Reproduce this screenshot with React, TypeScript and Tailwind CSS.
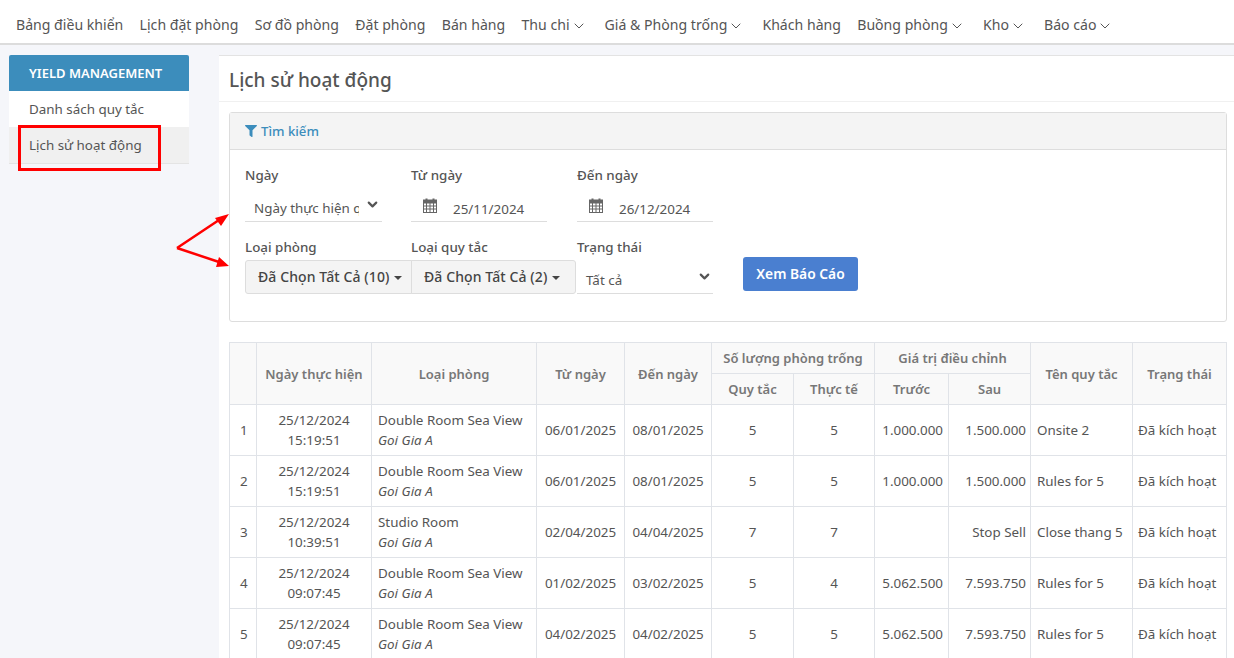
import { ChevronDown } from "lucide-react";
import { FaFilter } from "react-icons/fa";

const nav: [string, boolean][] = [
  ["Bảng điều khiển", false],
  ["Lịch đặt phòng", false],
  ["Sơ đồ phòng", false],
  ["Đặt phòng", false],
  ["Bán hàng", false],
  ["Thu chi", true],
  ["Giá & Phòng trống", true],
  ["Khách hàng", false],
  ["Buồng phòng", true],
  ["Kho", true],
  ["Báo cáo", true],
];

const rows = [
  ["1", "15:19:51", "Double Room Sea View", "06/01/2025", "08/01/2025", "5", "5", "1.000.000", "1.500.000", "Onsite 2"],
  ["2", "15:19:51", "Double Room Sea View", "06/01/2025", "08/01/2025", "5", "5", "1.000.000", "1.500.000", "Rules for 5"],
  ["3", "10:39:51", "Studio Room", "02/04/2025", "04/04/2025", "7", "7", "", "Stop Sell", "Close thang 5"],
  ["4", "09:07:45", "Double Room Sea View", "01/02/2025", "03/02/2025", "5", "4", "5.062.500", "7.593.750", "Rules for 5"],
  ["5", "09:07:45", "Double Room Sea View", "04/02/2025", "04/02/2025", "5", "5", "5.062.500", "7.593.750", "Rules for 5"],
];

const colWidths = [27, 115, 165, 88, 87, 82, 81, 74, 82, 102, 94];
const th = "border border-[#e0e3e8] bg-[#f9f9f9] font-semibold text-[13px] text-[#777] text-center align-middle p-0";
const td = "border border-[#e0e3e8] align-middle text-[#555] p-0";

function CalendarIcon() {
  return (
    <svg width="14" height="15" viewBox="0 0 14 15" className="mb-[6px] shrink-0" fill="none" stroke="#666">
      <rect x="0.5" y="2.5" width="13" height="12" fill="#fff" />
      <rect x="0.5" y="2" width="13" height="3" fill="#666" />
      <path d="M0.5 8 H13.5 M0.5 11 H13.5 M3.5 5 V14.5 M7 5 V14.5 M10.5 5 V14.5" strokeWidth="1" />
      <path d="M3.5 0.5 V3 M10.5 0.5 V3" strokeWidth="2" />
    </svg>
  );
}

function DateField({ value }: { value: string }) {
  return (
    <div className="flex items-center h-[31px] w-[136px] border-b border-[#ddd] pl-[12px] pt-[5px]">
      <CalendarIcon />
      <span className="ml-[16px]">{value}</span>
    </div>
  );
}

function Dropdown({ label, w }: { label: string; w: string }) {
  return (
    <div className={`${w} h-[34px] flex items-center gap-[5px] bg-[#f4f4f4] border border-[#ddd] font-medium text-[14px] tracking-[0.1px] text-[#444]`}>
      <span>{label}</span>
      <span className="w-0 h-0 border-x-[4px] border-x-transparent border-t-[4px] border-t-[#444] mt-[2px]" />
    </div>
  );
}

export default function App() {
  return (
    <div className="relative h-[658px] overflow-hidden bg-[#f5f6fa] text-[13.4px] leading-[20px] text-[#555] font-['Noto_Sans','Open_Sans',sans-serif]">
      <header className="h-[45px] bg-white border-b-2 border-[#dcdcdc] flex items-center pl-4 pt-[7px] gap-[16.3px] text-[14.1px] text-[#555]">
        {nav.map(([label, caret]) => (
          <span key={label} className={`flex items-center gap-[1px] whitespace-nowrap ${caret ? "pr-[1.75px]" : ""}`}>
            {label}
            {caret && <ChevronDown size={16} strokeWidth={1.5} className="mt-[1px]" />}
          </span>
        ))}
      </header>

      <div className="flex pt-[10px]">
        <aside className="w-[180px] ml-[9px] mr-[30px] shrink-0">
          <div className="rounded-t-[2px] h-[36px] bg-[#3c8dbc] text-white font-semibold text-[13px] flex items-center pl-5">
            YIELD MANAGEMENT
          </div>
          <div className="h-[36px] bg-white flex items-center pl-5">Danh sách quy tắc</div>
          <div className="h-[37px] bg-[#f0f0f0] border-b border-[#e4e4e4] flex items-center pl-5">Lịch sử hoạt động</div>
        </aside>

        <main className="flex-1 bg-white border-t border-[#e3e3e3] h-[603px]">
          <div className="h-[46px] border-b border-[#f0f0f0] flex items-center pl-[10px] pt-[2px] text-[19px] font-medium text-[#555]">
            Lịch sử hoạt động
          </div>

          <section className="ml-[10px] mt-[10px] w-[998px] h-[210px] border border-[#ddd] rounded-[3px]">
            <div className="h-[37px] bg-[#f4f4f4] border-b border-[#ddd] flex items-center pl-[15px] gap-[4px] text-[#3c8dbc] font-medium text-[13.2px]">
              <FaFilter className="text-[12px]" />
              <span>Tìm kiếm</span>
            </div>
            <div className="pl-[15px] pt-[15px]">
              <div className="grid grid-cols-[166px_166px_137px] items-start">
                <div>
                  <div className="font-medium mb-[6px]">Ngày</div>
                  <div className="flex items-center justify-between h-[31px] w-[137px] border-b border-[#ddd] pl-[9px] pr-[2px] pt-[4px]">
                    <span className="w-[105px] overflow-hidden whitespace-nowrap">Ngày thực hiện quy tắc</span>
                    <ChevronDown size={15} strokeWidth={3.5} className="mb-[7px]" />
                  </div>
                </div>
                <div>
                  <div className="font-medium mb-[6px]">Từ ngày</div>
                  <DateField value="25/11/2024" />
                </div>
                <div>
                  <div className="font-medium mb-[6px]">Đến ngày</div>
                  <DateField value="26/12/2024" />
                </div>
              </div>
              <div className="flex mt-[15px] items-start">
                <div className="w-[166px]">
                  <div className="font-medium mb-[3px]">Loại phòng</div>
                  <Dropdown label="Đã Chọn Tất Cả (10)" w="w-[167px] pl-[12px] rounded-l-[3px]" />
                </div>
                <div className="w-[166px]">
                  <div className="font-medium mb-[3px]">Loại quy tắc</div>
                  <Dropdown label="Đã Chọn Tất Cả (2)" w="w-[165px] pl-[12px] rounded-r-[3px]" />
                </div>
                <div className="w-[136px]">
                  <div className="font-medium mb-[3px]">Trạng thái</div>
                  <div className="flex items-center justify-between h-[34px] border-b border-[#ddd] pl-[9px] pr-[1px] pt-[6px]">
                    <span>Tất cả</span>
                    <ChevronDown size={15} strokeWidth={3.5} className="mb-[6px]" />
                  </div>
                </div>
                <button className="ml-[30px] mt-[20px] w-[115px] h-[34px] bg-[#4a7fd0] text-white font-semibold text-[13.8px] rounded-[3px]">
                  Xem Báo Cáo
                </button>
              </div>
            </div>
          </section>

          <table className="ml-[10px] mt-[20px] table-fixed border-collapse w-[997px]">
            <colgroup>
              {colWidths.map((w, i) => (
                <col key={i} style={{ width: w }} />
              ))}
            </colgroup>
            <thead>
              <tr className="h-[31px]">
                <th rowSpan={2} className={th}></th>
                <th rowSpan={2} className={th}>Ngày thực hiện</th>
                <th rowSpan={2} className={th}>Loại phòng</th>
                <th rowSpan={2} className={th}>Từ ngày</th>
                <th rowSpan={2} className={th}>Đến ngày</th>
                <th colSpan={2} className={th}>Số lượng phòng trống</th>
                <th colSpan={2} className={th}>Giá trị điều chỉnh</th>
                <th rowSpan={2} className={th}>Tên quy tắc</th>
                <th rowSpan={2} className={th}>Trạng thái</th>
              </tr>
              <tr className="h-[31px]">
                <th className={th}>Quy tắc</th>
                <th className={th}>Thực tế</th>
                <th className={th}>Trước</th>
                <th className={th}>Sau</th>
              </tr>
            </thead>
            <tbody>
              {rows.map((r) => (
                <tr key={r[0]} className="h-[51px]">
                  <td className={`${td} pl-[10px]`}>{r[0]}</td>
                  <td className={`${td} text-center`}>
                    25/12/2024
                    <br />
                    {r[1]}
                  </td>
                  <td className={`${td} pl-[6px]`}>
                    {r[2]}
                    <br />
                    <i>Goi Gia A</i>
                  </td>
                  <td className={`${td} text-center`}>{r[3]}</td>
                  <td className={`${td} text-center`}>{r[4]}</td>
                  <td className={`${td} text-center`}>{r[5]}</td>
                  <td className={`${td} text-center`}>{r[6]}</td>
                  <td className={`${td} text-right pr-[5px]`}>{r[7]}</td>
                  <td className={`${td} text-right pr-[4px]`}>{r[8]}</td>
                  <td className={`${td} pl-[6px]`}>{r[9]}</td>
                  <td className={`${td} pl-[5px]`}>Đã kích hoạt</td>
                </tr>
              ))}
            </tbody>
          </table>
        </main>
      </div>

      {/* Red annotations over the page */}
      <div className="absolute left-[18px] top-[125px] w-[143px] h-[46px] border-[3px] border-[#f00]" />
      <svg className="absolute left-[170px] top-[205px]" width="65" height="70" viewBox="0 0 65 70">
        <path d="M7 43 L52 13 M7 43 L52 58" stroke="#f00" strokeWidth="2.5" fill="none" />
        <path d="M59 9 L45 13 L51 21 Z M59 61 L46 62 L49 52 Z" fill="#f00" />
      </svg>
    </div>
  );
}
